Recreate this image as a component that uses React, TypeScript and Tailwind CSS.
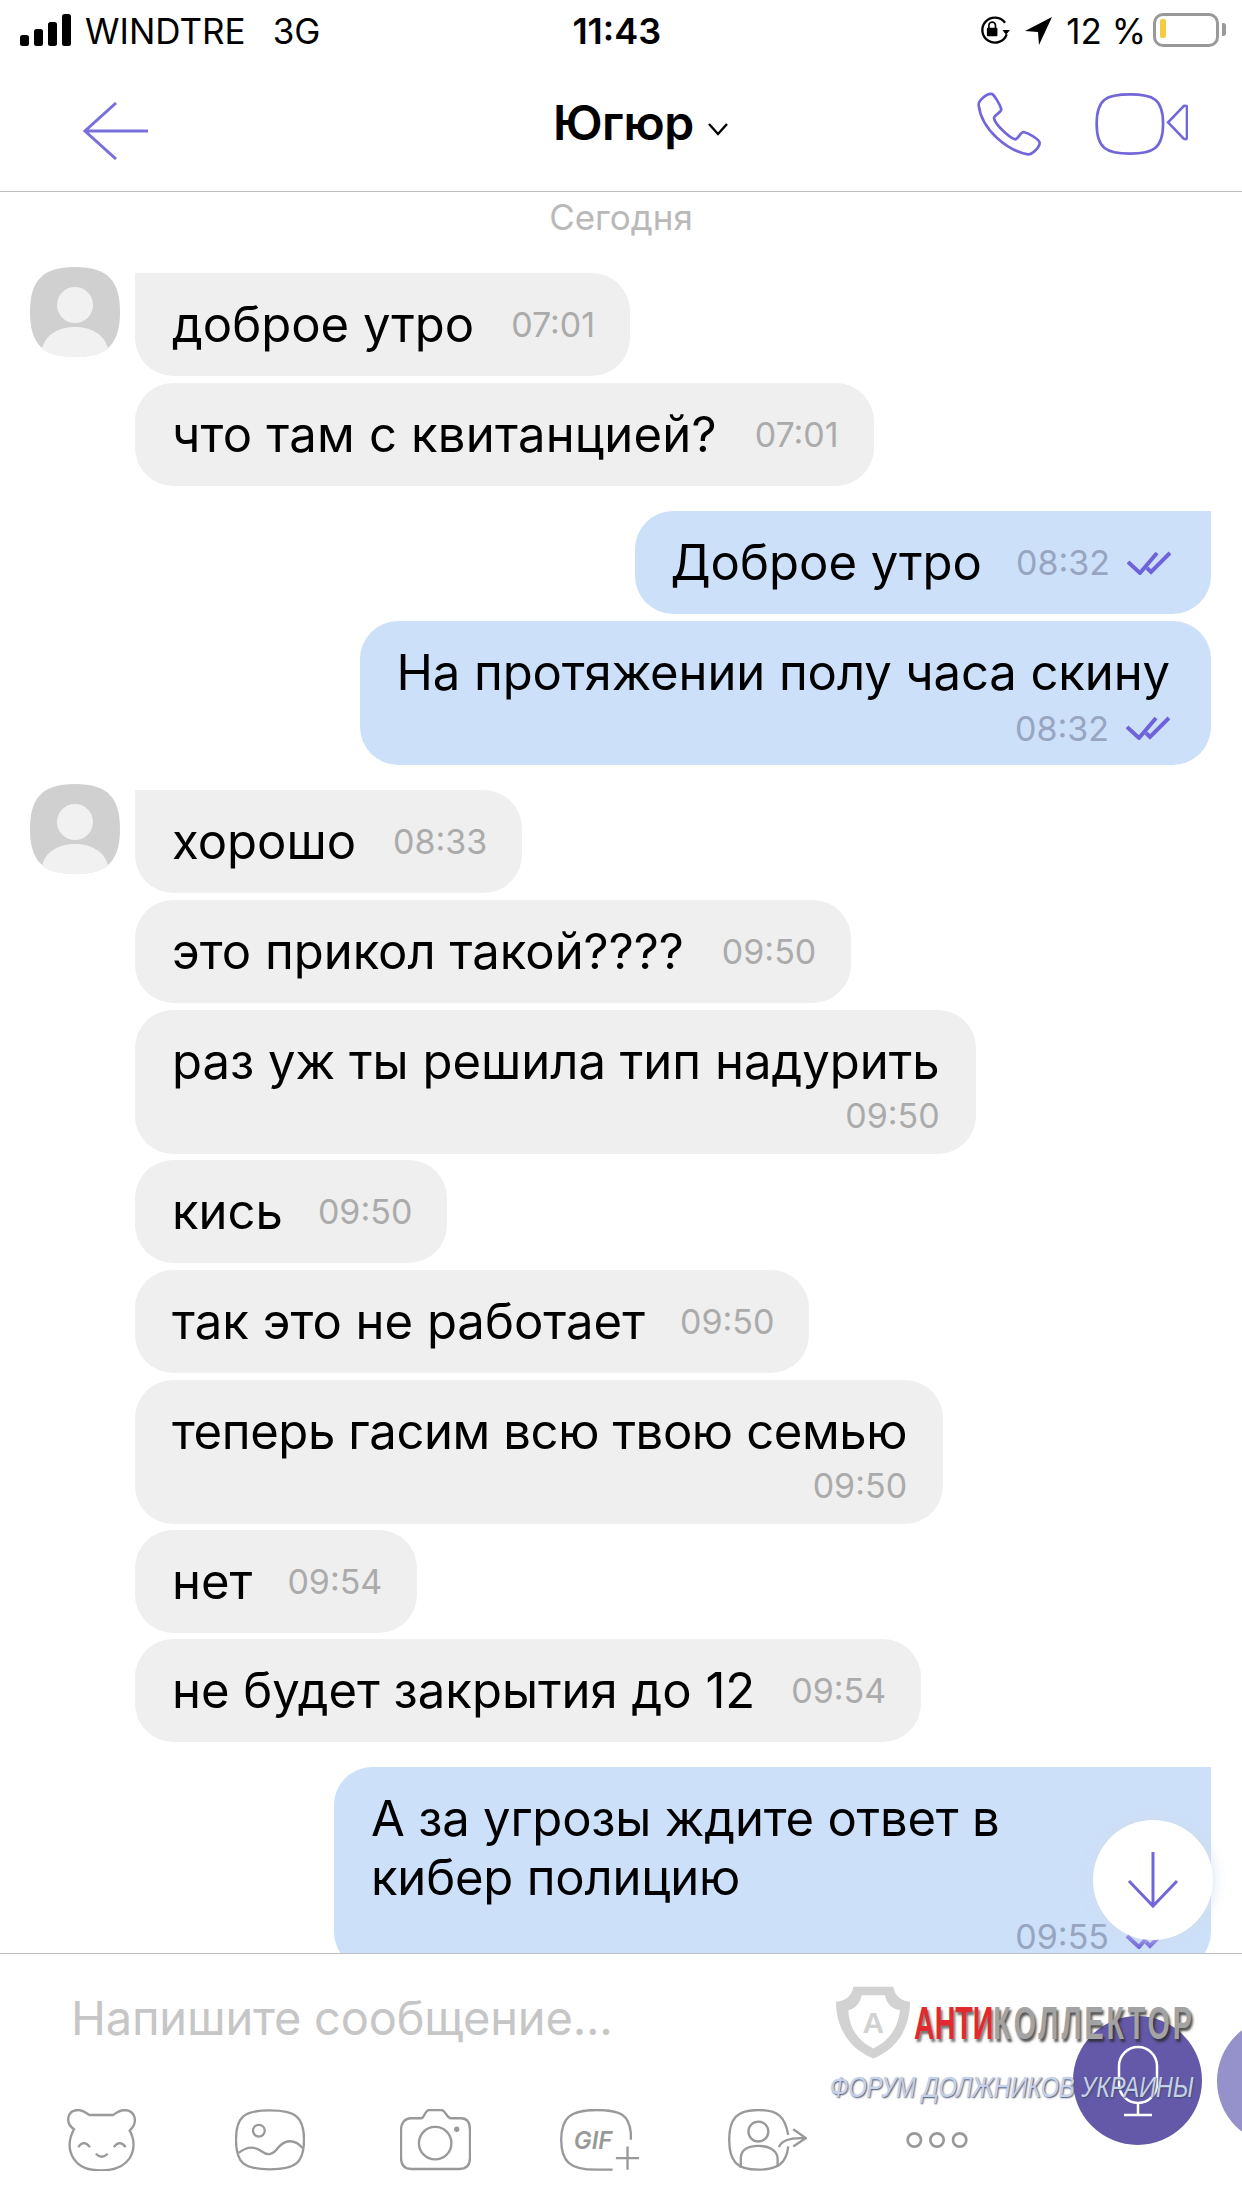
import React from "react";

type Msg = { text: string; time: string; out?: boolean; first?: boolean; stacked?: boolean; gap: string; mt: string; track?: string };

const msgs: Msg[] = [
  { text: "доброе утро", time: "07:01", first: true, gap: "ml-[37px]", mt: "mt-[34px]" },
  { text: "что там с квитанцией?", time: "07:01", gap: "ml-[38px]", mt: "mt-[7px]", track: "tracking-[0.2px]" },
  { text: "Доброе утро", time: "08:32", out: true, first: true, gap: "ml-[34px]", mt: "mt-[25px]" },
  { text: "На протяжении полу часа скину", time: "08:32", out: true, stacked: true, gap: "", mt: "mt-[7px]", track: "tracking-[-0.1px]" },
  { text: "хорошо", time: "08:33", first: true, gap: "ml-[37px]", mt: "mt-[25px]" },
  { text: "это прикол такой????", time: "09:50", gap: "ml-[38px]", mt: "mt-[7px]" },
  { text: "раз уж ты решила тип надурить", time: "09:50", stacked: true, gap: "", mt: "mt-[7px]" },
  { text: "кись", time: "09:50", gap: "ml-[35px]", mt: "mt-[6px]" },
  { text: "так это не работает", time: "09:50", gap: "ml-[35px]", mt: "mt-[7px]" },
  { text: "теперь гасим всю твою семью", time: "09:50", stacked: true, gap: "", mt: "mt-[7px]", track: "tracking-[-0.4px]" },
  { text: "нет", time: "09:54", gap: "ml-[35px]", mt: "mt-[6px]" },
  { text: "не будет закрытия до 12", time: "09:54", gap: "ml-[36px]", mt: "mt-[6px]" },
];

function Ticks() {
  return (
    <svg width="44" height="24" viewBox="0 0 44 24" fill="none" stroke="#6f63dc" strokeWidth="4" className="ml-[17px] shrink-0">
      <path d="M1 11 L13 22 L30 2" />
      <path d="M20 17 L24 21 L43 2" />
    </svg>
  );
}

function Avatar() {
  return (
    <svg width="90" height="90" viewBox="0 0 90 90" className="shrink-0 -mt-[6px] mr-[15px]">
      <path d="M45 0 C78 0 90 14 90 45 C90 76 78 90 45 90 C12 90 0 76 0 45 C0 14 12 0 45 0Z" fill="#d0d0d0" />
      <ellipse cx="45" cy="38" rx="18" ry="18" fill="#f1f1f1" />
      <path d="M12 82 C15 67 30 60 45 60 C60 60 75 67 78 82 C70 88 60 90 45 90 C30 90 20 88 12 82Z" fill="#f1f1f1" />
    </svg>
  );
}

function Bubble({ m }: { m: Msg }) {
  const tone = m.out ? "bg-[#cce0f9]" : "bg-[#efefef]";
  const corner = m.first ? (m.out ? "rounded-tr-none" : "rounded-tl-none") : "";
  const timeColor = m.out ? "text-[#98a5c0]" : "text-[#ababab]";
  const bubble = m.stacked ? (
    <div className={`${tone} ${corner} rounded-[38px] pl-[37px] ${m.out ? "pr-[41px]" : "pr-[36px]"} pt-[21px] pb-[20px]`}>
      <div className={`text-[49px] leading-[61px] text-black whitespace-nowrap ${m.track ?? ""}`}>{m.text}</div>
      <div className={`flex items-center justify-end h-[42px] ${m.out ? "pt-[8px]" : "pt-[4px]"}`}>
        <span className={`text-[34px] ${timeColor}`}>{m.time}</span>
        {m.out && <Ticks />}
      </div>
    </div>
  ) : (
    <div className={`${tone} ${corner} rounded-[38px] ${m.out ? "pl-[35px] pr-[40px]" : "pl-[37px] pr-[35px]"} py-[21px] flex items-center`}>
      <span className={`text-[49px] leading-[61px] text-black whitespace-nowrap ${m.track ?? ""}`}>{m.text}</span>
      <span className={`text-[34px] ${m.gap} ${timeColor}`}>{m.time}</span>
      {m.out && <Ticks />}
    </div>
  );
  if (m.out) {
    return <div className={`flex justify-end pr-[31px] ${m.mt}`}>{bubble}</div>;
  }
  return (
    <div className={`flex items-start ${m.first ? "pl-[30px]" : "pl-[135px]"} ${m.mt}`}>
      {m.first && <Avatar />}
      {bubble}
    </div>
  );
}

function Header() {
  return (
    <div className="h-[132px] shrink-0 border-b border-[#bdbdbd] flex items-center">
      <svg width="66" height="58" viewBox="0 0 66 58" fill="none" stroke="#7a70dc" strokeWidth="3" className="ml-[83px] mt-[10px]">
        <path d="M33 1 L2 29 L33 57 M2 29 L65 29" />
      </svg>
      <div className="ml-[404px] text-[48px] leading-[60px] font-semibold text-black -mt-[5px] -tracking-[0.5px]">Югюр</div>
      <svg width="22" height="14" viewBox="0 0 22 14" fill="none" stroke="#000" strokeWidth="2.4" className="ml-[13px] mt-[6px]">
        <path d="M2 2 L11 12 L20 2" />
      </svg>
      <svg width="66" height="64" viewBox="52 278 198 192" fill="none" stroke="#7267d8" strokeWidth="8" className="ml-auto -mt-[4px]">
        <path d="M60 318 C58 305 85 280 100 284 C108 288 125 318 128 330 C128 340 108 345 106 356 C108 375 155 418 170 420 C180 418 185 398 195 398 C210 402 240 418 243 430 C243 445 220 466 208 465 C150 455 70 395 60 318Z" />
      </svg>
      <svg width="93" height="64" viewBox="405 282 280 188" fill="none" stroke="#7267d8" strokeWidth="8" className="ml-[53px] mr-[54px] -mt-[4px]">
        <path d="M510 287 C580 287 610 300 610 375 C610 450 580 465 510 465 C440 465 410 450 410 375 C410 300 440 287 510 287Z" />
        <path d="M625 371 L672 322 Q684 318 682 330 L682 412 Q684 425 672 420Z" />
      </svg>
    </div>
  );
}

function StatusBar() {
  return (
    <div className="h-[60px] shrink-0 flex items-center text-black text-[35px] pt-[2px]">
      <svg width="51" height="32" viewBox="0 0 51 32" className="ml-[20px] -mt-[2px]">
        <rect x="0" y="21" width="9" height="11" rx="2.5" />
        <rect x="14" y="15" width="9" height="17" rx="2.5" />
        <rect x="28" y="8" width="9" height="24" rx="2.5" />
        <rect x="42" y="0" width="9" height="32" rx="2.5" />
      </svg>
      <span className="ml-[14px]">WINDTRE</span>
      <span className="ml-[27px]">3G</span>
      <span className="ml-[252px] font-semibold text-[36px]">11:43</span>
      <svg width="33" height="30" viewBox="55 50 100 90" fill="none" className="ml-auto">
        <path d="M140 70 A38 38 0 1 0 145 105" stroke="#000" strokeWidth="7" />
        <path d="M132 92 L155 92 L143 106Z" fill="#000" />
        <rect x="85" y="85" width="32" height="26" rx="3" fill="#000" />
        <path d="M91 86 V78 A10 10 0 0 1 111 78 V86" stroke="#000" strokeWidth="5" />
      </svg>
      <svg width="28" height="28" viewBox="0 0 28 28" className="ml-[15px]">
        <path d="M27 0 L0 14 L13 15 L14 28Z" fill="#000" />
      </svg>
      <span className="ml-[13px]">12 %</span>
      <div className="ml-[7px] mr-[23px] relative w-[66px] h-[34px] border-[3px] border-[#999] rounded-[10px] p-[3px] -mt-[2px]">
        <div className="w-[6px] h-[19px] bg-[#f3cb45] rounded-[2px] ml-[1px]" />
        <div className="absolute -right-[10px] top-[7px] w-[4px] h-[13px] bg-[#999] rounded-r-[3px]" />
      </div>
    </div>
  );
}

function Composer() {
  return (
    <div className="h-[254px] shrink-0 bg-white flex flex-col">
      <div className="h-[155px] pl-[71px] pt-[33px] text-[47px] leading-[62px] tracking-[-0.2px] text-[#c6c6c6]">Напишите сообщение...</div>
      <div className="flex items-start text-[#999]">
        <svg width="71" height="62" viewBox="48 57 214 187" fill="none" stroke="#999" strokeWidth="7" className="ml-[66px]">
          <path d="M72 118 C45 100 50 60 85 60 C100 60 110 70 118 75 L190 75 C198 70 208 60 225 60 C260 62 265 100 240 122 C255 150 255 180 240 205 C220 235 190 242 155 242 C115 242 90 235 70 205 C55 180 55 150 72 118Z" />
          <path d="M85 172 Q102 148 120 172 M192 172 Q210 148 228 172 M138 192 Q155 210 174 192" />
        </svg>
        <svg width="70" height="62" viewBox="554 57 214 187" fill="none" stroke="#999" strokeWidth="7" className="ml-[98px]">
          <path d="M660 60 C740 60 765 80 765 150 C765 220 740 240 660 240 C580 240 557 220 557 150 C557 80 580 60 660 60Z" />
          <circle cx="627" cy="122" r="18" />
          <path d="M565 190 C590 170 615 170 635 185 C655 200 670 195 685 175 C705 150 735 145 760 175" />
        </svg>
        <svg width="71" height="62" viewBox="1051 57 214 187" fill="none" stroke="#999" strokeWidth="7" className="ml-[95px]">
          <path d="M1085 85 L1115 85 C1125 85 1125 60 1140 60 L1175 60 C1190 60 1190 85 1205 85 L1235 85 C1255 85 1262 100 1262 120 L1262 205 C1262 228 1250 238 1230 238 L1085 238 C1065 238 1054 228 1054 205 L1054 120 C1054 100 1065 85 1085 85Z" />
          <circle cx="1157" cy="160" r="49" />
          <circle cx="1222" cy="118" r="8" fill="#999" stroke="none" />
        </svg>
        <svg width="80" height="62" viewBox="57 57 240 187" fill="none" stroke="#999" strokeWidth="7" className="ml-[89px]">
          <path d="M270 150 L270 130 C265 75 240 60 165 60 C85 60 60 85 60 150 C60 215 85 240 165 240 L215 240" />
          <text x="98" y="179" fontSize="72" fontStyle="italic" fontWeight="600" fill="#999" stroke="none" fontFamily="Inter, sans-serif">GIF</text>
          <path d="M225 205 L295 205 M260 170 L260 240" />
        </svg>
        <svg width="79" height="62" viewBox="559 57 237 187" fill="none" stroke="#999" strokeWidth="7" className="ml-[88px]">
          <path d="M740 135 C730 80 710 60 650 60 C585 60 562 85 562 150 C562 215 585 240 650 240 C710 240 735 220 740 170" />
          <circle cx="650" cy="125" r="30" />
          <path d="M597 235 L597 205 C597 180 620 168 650 168 C680 168 705 180 708 205 L708 230" />
          <path d="M712 172 C720 150 745 143 790 145 M755 118 L793 145 L755 170" />
        </svg>
        <svg width="62" height="18" viewBox="0 0 186 54" fill="none" stroke="#999" strokeWidth="8" className="ml-[99px] mt-[22px]">
          <circle cx="25" cy="27" r="20" />
          <circle cx="93" cy="27" r="20" />
          <circle cx="161" cy="27" r="20" />
        </svg>
      </div>
    </div>
  );
}

function Watermark() {
  return (
    <div className="absolute left-[830px] top-[1986px] w-[370px] h-[116px]">
      <svg width="74" height="73" viewBox="48 78 222 218" className="absolute left-[6px] top-0">
        <path fillRule="evenodd" fill="#d2d2d2" d="M100 80 L220 80 C225 110 245 122 270 125 C270 200 235 265 160 295 C85 265 48 200 48 125 C75 122 95 110 100 80Z M125 105 L195 105 C200 130 215 145 240 150 C235 200 210 240 160 265 C110 240 88 200 85 150 C105 145 120 130 125 105Z" />
        <text x="160" y="218" textAnchor="middle" fontSize="90" fontWeight="700" fill="#d2d2d2" fontFamily="Liberation Sans, sans-serif">А</text>
      </svg>
      <div className="absolute left-[84px] top-[14px] flex text-[47px] leading-[46px] font-bold whitespace-nowrap origin-left scale-x-[0.608] [font-family:'Liberation_Sans',sans-serif]">
        <span className="text-[#e02a2e] [text-shadow:3px_3px_3px_rgba(60,60,60,0.7)]">АНТИ</span>
        <span className="text-[#a3a3a3] tracking-[5px] [text-shadow:3px_3px_3px_rgba(40,40,40,0.8)]">КОЛЛЕКТОР</span>
      </div>
      <div className="absolute left-0 top-[86px] text-[30px] leading-[30px] italic whitespace-nowrap text-[#c6d1ea] origin-left scale-x-[0.78] [font-family:'Liberation_Sans',sans-serif] [text-shadow:1px_1px_2px_#3d4a66]">
        ФОРУМ ДОЛЖНИКОВ УКРАИНЫ
      </div>
    </div>
  );
}

export default function App() {
  return (
    <div className="relative w-[1242px] h-[2208px] bg-white overflow-hidden flex flex-col font-['Inter','Roboto',sans-serif]">
      <StatusBar />
      <Header />
      <div className="h-[1762px] shrink-0 overflow-hidden border-b border-[#bdbdbd] flex flex-col">
        <div className="shrink-0 text-center text-[35px] leading-[44px] text-[#b9b9b9] pt-[3px]">Сегодня</div>
        {msgs.map((m, i) => (
          <Bubble key={i} m={m} />
        ))}
        <div className="flex justify-end pr-[31px] mt-[25px] shrink-0">
          <div className="w-[877px] h-[203px] bg-[#cce0f9] rounded-[38px] rounded-tr-none pl-[37px] pr-[41px] pt-[22px]">
            <div className="text-[49px] leading-[59px] tracking-[-0.2px] text-black">
              А за угрозы ждите ответ в
              <br />
              кибер полицию
            </div>
            <div className="flex items-center justify-end h-[34px] mt-[13px]">
              <span className="text-[34px] leading-[34px] text-[#98a5c0]">09:55</span>
              <Ticks />
            </div>
          </div>
        </div>
      </div>
      <Composer />
      <div className="absolute left-[1093px] top-[1820px] w-[120px] h-[120px] rounded-full bg-white shadow-[0_0_14px_rgba(210,220,235,0.9)] flex items-center justify-center">
        <svg width="52" height="58" viewBox="0 0 52 58" fill="none" stroke="#7267d8" strokeWidth="3">
          <path d="M26 1 L26 55 M2 30 L26 55 L50 30" />
        </svg>
      </div>
      <div className="absolute left-[1073px] top-[2016px] w-[129px] h-[129px] rounded-full bg-[#6359a8] flex items-center justify-center">
        <svg width="42" height="72" viewBox="0 0 42 72" fill="none" stroke="#fff" strokeWidth="2.5">
          <rect x="2" y="2" width="38" height="56" rx="19" />
          <path d="M21 58 L21 70 M7 70 L35 70" />
        </svg>
      </div>
      <div className="absolute left-[1217px] top-[2017px] w-[128px] h-[128px] rounded-full bg-[#9591cb]" />
      <Watermark />
    </div>
  );
}
